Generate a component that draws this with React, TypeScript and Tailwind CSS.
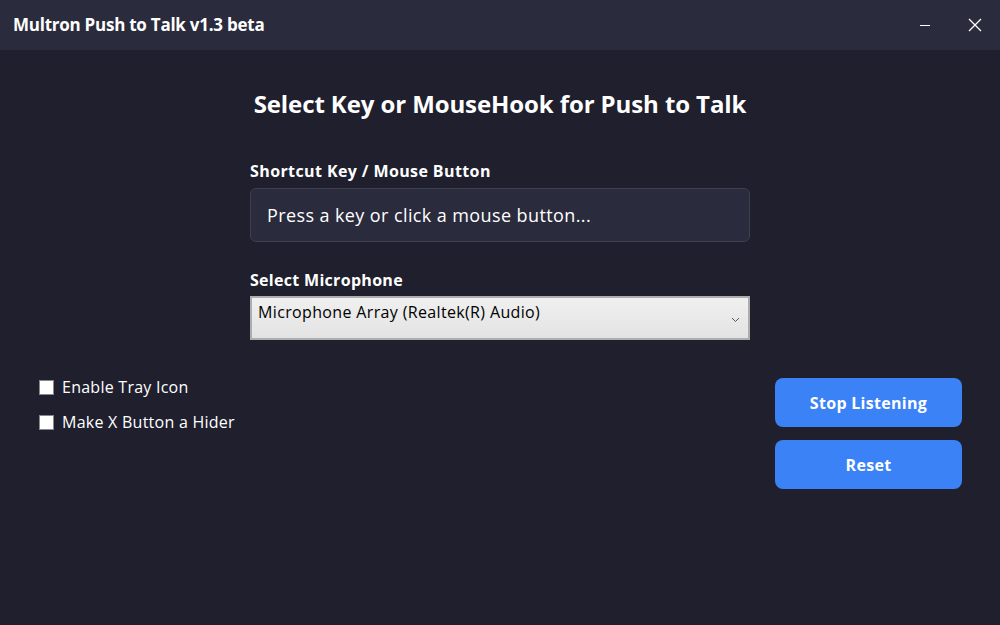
import React from 'react'

const font = { fontFamily: '"Open Sans", "Noto Sans", sans-serif' }

export default function App() {
  return (
    <div className="w-[1000px] h-[625px] bg-[#1f1f2e] text-white flex flex-col" style={font}>
      <div className="h-[50px] bg-[#2a2b3c] flex items-center justify-between pl-[13px] shrink-0">
        <span className="text-[17px] font-bold tracking-[-0.25px]">Multron Push to Talk v1.3 beta</span>
        <div className="flex items-center h-full">
          <div className="w-[50px] h-full flex items-center justify-center">
            <div className="w-[10px] h-px bg-white" />
          </div>
          <div className="w-[50px] h-full flex items-center justify-center">
            <svg width="14" height="14" viewBox="0 0 14 14" stroke="white" strokeWidth="1.3">
              <path d="M1 1L13 13M13 1L1 13" />
            </svg>
          </div>
        </div>
      </div>

      <div className="flex flex-col items-center pt-[38px]">
        <h1 className="text-[24px] font-bold leading-[32px] tracking-[-0.1px]">
          Select Key or MouseHook for Push to Talk
        </h1>
        <div className="w-[500px] mt-[40px]">
          <label className="block text-[16px] font-bold leading-[22px] tracking-[0.4px]">Shortcut Key / Mouse Button</label>
          <div className="mt-[6px] h-[54px] rounded-md bg-[#2a2b3c] border border-[#3e3f4f] flex items-center px-4 text-[18px] tracking-[0.4px]">
            Press a key or click a mouse button...
          </div>
          <label className="block mt-[27px] text-[16px] font-bold leading-[22px] tracking-[0.3px]">Select Microphone</label>
          <div className="mt-[5px] h-[44px] border-2 border-[#adadad] bg-gradient-to-b from-[#f0f0f0] to-[#e3e3e3] text-black flex items-start justify-between pl-[6px] pr-[8px] pt-[2px]">
            <span className="text-[16px] tracking-[0.35px]">Microphone Array (Realtek(R) Audio)</span>
            <svg width="9" height="6" viewBox="0 0 9 6" className="mt-[17px]" fill="none" stroke="#555" strokeWidth="1">
              <path d="M1 1L4.5 4.5L8 1" />
            </svg>
          </div>
        </div>
      </div>

      <div className="flex justify-between items-start mt-[38px] pl-[39px] pr-[38px]">
        <div className="flex flex-col gap-[15px] -mt-[1px]">
          <label className="flex items-center gap-[8px] text-[16px] leading-[20px] tracking-[0.25px]">
            <span className="w-[15px] h-[15px] bg-white border border-[#888]" />
            Enable Tray Icon
          </label>
          <label className="flex items-center gap-[8px] text-[16px] leading-[20px] tracking-[0.25px]">
            <span className="w-[15px] h-[15px] bg-white border border-[#888]" />
            Make X Button a Hider
          </label>
        </div>
        <div className="flex flex-col gap-[13px]">
          <button className="w-[187px] h-[49px] rounded-lg bg-[#3b82f6] text-[16px] font-bold tracking-[0.3px]">
            Stop Listening
          </button>
          <button className="w-[187px] h-[49px] rounded-lg bg-[#3b82f6] text-[16px] font-bold tracking-[0.3px]">
            Reset
          </button>
        </div>
      </div>
    </div>
  )
}
